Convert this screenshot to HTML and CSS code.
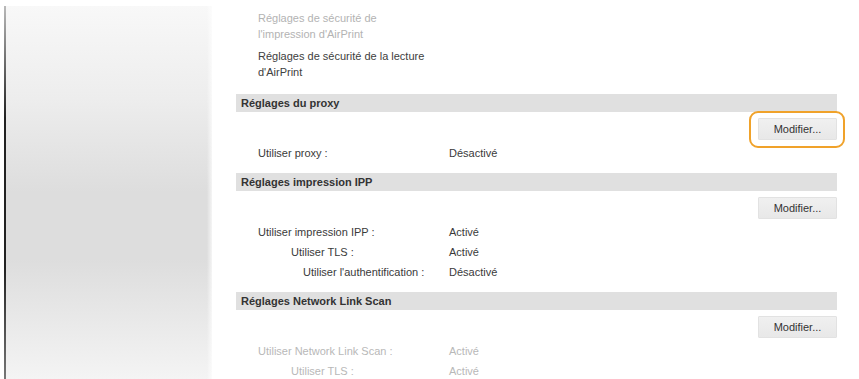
FILE: index.html
```html
<!DOCTYPE html>
<html lang="fr">
<head>
<meta charset="utf-8">
<title>Réglages</title>
<link rel="stylesheet" href="styles.css">
</head>
<body>
<div class="page">
  <aside class="sidebar"></aside>
  <main class="main">
    <ul class="links">
      <li class="link dim">Réglages de sécurité de<br>l'impression d'AirPrint</li>
      <li class="link">Réglages de sécurité de la lecture<br>d'AirPrint</li>
    </ul>

    <section class="section">
      <h2 class="section-title">Réglages du proxy</h2>
      <div class="actions">
        <button class="btn highlighted" type="button">Modifier...</button>
      </div>
      <dl class="rows">
        <div class="row"><dt class="label">Utiliser proxy :</dt><dd class="value">Désactivé</dd></div>
      </dl>
    </section>

    <section class="section">
      <h2 class="section-title">Réglages impression IPP</h2>
      <div class="actions">
        <button class="btn" type="button">Modifier...</button>
      </div>
      <dl class="rows">
        <div class="row"><dt class="label">Utiliser impression IPP :</dt><dd class="value">Activé</dd></div>
        <div class="row"><dt class="label lvl2">Utiliser TLS :</dt><dd class="value">Activé</dd></div>
        <div class="row"><dt class="label lvl3">Utiliser l'authentification :</dt><dd class="value">Désactivé</dd></div>
      </dl>
    </section>

    <section class="section">
      <h2 class="section-title">Réglages Network Link Scan</h2>
      <div class="actions">
        <button class="btn" type="button">Modifier...</button>
      </div>
      <dl class="rows dim">
        <div class="row"><dt class="label">Utiliser Network Link Scan :</dt><dd class="value">Activé</dd></div>
        <div class="row"><dt class="label lvl2">Utiliser TLS :</dt><dd class="value">Activé</dd></div>
      </dl>
    </section>
  </main>
</div>
</body>
</html>
```

FILE: styles.css
```css
* { box-sizing: border-box; }

html, body {
  margin: 0;
  padding: 0;
  background: #ffffff;
  height: 100%;
  overflow: hidden;
}

body {
  font-family: "Liberation Sans", Arial, sans-serif;
  font-size: 11px;
  color: #3a3a3a;
}

.page {
  display: flex;
  align-items: stretch;
  height: 100%;
}

.sidebar {
  flex: 0 0 208px;
  margin: 6px 0 0 4px;
  border-left: 2px solid #555;
  border-image: linear-gradient(#bbb, #222 30%, #222 70%, #777) 1;
  background:
    linear-gradient(to right, rgba(255,255,255,0) 97.5%, rgba(255,255,255,0.7)),
    linear-gradient(#f8f8f8 0%, #ededed 25%, #dddddd 50%, #dddddd 68%, #f4f4f4 100%);
}

.main {
  width: 601px;
  margin-left: 24px;
}

.links {
  list-style: none;
  margin: 0;
  padding: 10px 0 0 22px;
}

.link {
  line-height: 16px;
  color: #404040;
  margin-bottom: 6px;
}

.dim { color: #b3b3b3; }

.links .dim { color: #b3b3b3; }

.links + .section { margin-top: 14px; }

.section-title {
  margin: 0;
  height: 18px;
  line-height: 18px;
  padding-left: 5px;
  background: #e0e0e0;
  font-size: 11px;
  font-weight: bold;
  color: #333;
}

.actions {
  display: flex;
  justify-content: flex-end;
  padding-top: 6px;
}

.btn {
  position: relative;
  width: 79px;
  height: 22px;
  padding: 0;
  font-family: "Liberation Sans", Arial, sans-serif;
  font-size: 11px;
  color: #333;
  background: linear-gradient(#f0f0f0, #e8e8e8);
  border: 1px solid #e2e2e2;
  border-radius: 1px;
}

.highlighted::after {
  content: "";
  position: absolute;
  left: -10px;
  right: -9px;
  top: -8px;
  bottom: -9px;
  border: 2.5px solid #f0a22a;
  border-radius: 9px;
}

.rows {
  margin: 3px 0 0 0;
  padding: 0 0 10px 22px;
}

.row {
  display: flex;
  line-height: 20px;
  height: 20px;
}

.label {
  flex: 0 0 191px;
  margin: 0;
}

.lvl2 { padding-left: 33px; }
.lvl3 { padding-left: 45px; }

.value { margin: 0; }

.rows.dim { color: #b8b8b8; }
```
